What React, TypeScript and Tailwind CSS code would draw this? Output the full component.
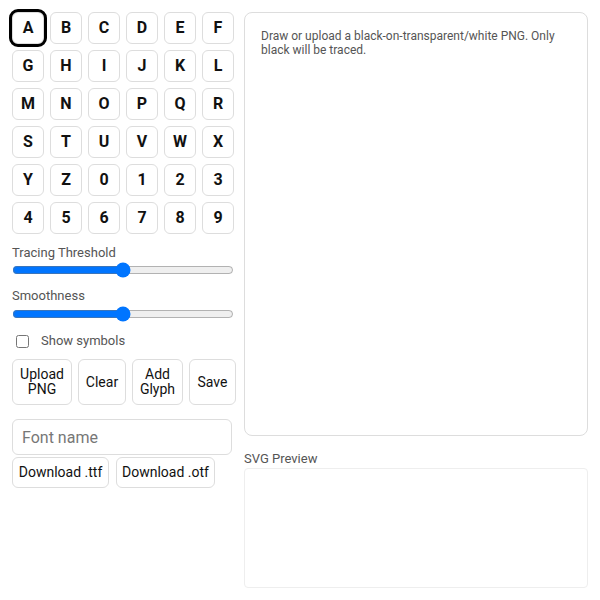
import React from "react";

const chars = "ABCDEFGHIJKLMNOPQRSTUVWXYZ0123456789".split("");

export default function App() {
  return (
    <div className="flex gap-[10px] p-3 bg-white text-[#111] font-['Roboto',sans-serif]">
      <div className="w-[222px] shrink-0 flex flex-col">
        <div className="grid grid-cols-6 gap-[6px]">
          {chars.map((c, i) => (
            <div
              key={c}
              className={
                i === 0
                  ? "h-8 w-8 flex items-center justify-center rounded-[6px] border border-[#ddd] bg-white text-[16px] font-bold outline-[3px] outline-black outline outline-offset-0"
                  : "h-8 w-8 flex items-center justify-center rounded-[6px] border border-[#ddd] bg-white text-[16px] font-bold"
              }
            >
              {c}
            </div>
          ))}
        </div>
        <div className="mt-[11px] text-[13px] leading-4 text-[#555]">Tracing Threshold</div>
        <input type="range" defaultValue={50} className="mt-[1px] w-full h-4" />
        <div className="mt-[10px] text-[13px] leading-4 text-[#555]">Smoothness</div>
        <input type="range" defaultValue={50} className="mt-[2px] w-full h-4" />
        <label className="mt-[11px] flex items-center gap-3 h-4 text-[13px] text-[#555]">
          <input type="checkbox" className="ml-1 h-[13px] w-[13px]" />
          Show symbols
        </label>
        <div className="mt-[10px] flex gap-[6px] w-[226px]">
          <button className="h-[46px] w-[60px] rounded-[6px] border border-[#ddd] bg-white text-[14px] leading-[15px]">
            Upload
            <br />
            PNG
          </button>
          <button className="h-[46px] w-[48px] rounded-[6px] border border-[#ddd] bg-white text-[14px] leading-[15px]">
            Clear
          </button>
          <button className="h-[46px] w-[51px] rounded-[6px] border border-[#ddd] bg-white text-[14px] leading-[15px]">
            Add
            <br />
            Glyph
          </button>
          <button className="h-[46px] w-[47px] rounded-[6px] border border-[#ddd] bg-white text-[14px] leading-[15px]">
            Save
          </button>
        </div>
        <input
          placeholder="Font name"
          className="mt-[14px] h-9 w-[220px] rounded-[6px] border border-[#ddd] px-[9px] text-[16px] placeholder:text-[#777] outline-none"
        />
        <div className="mt-[2px] flex gap-[7px]">
          <button className="h-[31px] w-[97px] rounded-[6px] border border-[#ddd] bg-white text-[14px]">
            Download .ttf
          </button>
          <button className="h-[31px] w-[99px] rounded-[6px] border border-[#ddd] bg-white text-[14px]">
            Download .otf
          </button>
        </div>
      </div>
      <div className="flex-1 flex flex-col">
        <div className="h-[424px] rounded-lg border border-[#ddd] p-4 text-[12px] leading-[14px] text-[#555]">
          Draw or upload a black-on-transparent/white PNG. Only black will be traced.
        </div>
        <div className="mt-[15px] text-[13px] leading-4 text-[#555]">SVG Preview</div>
        <div className="mt-[1px] h-[120px] rounded border border-[#eee]" />
      </div>
    </div>
  );
}
